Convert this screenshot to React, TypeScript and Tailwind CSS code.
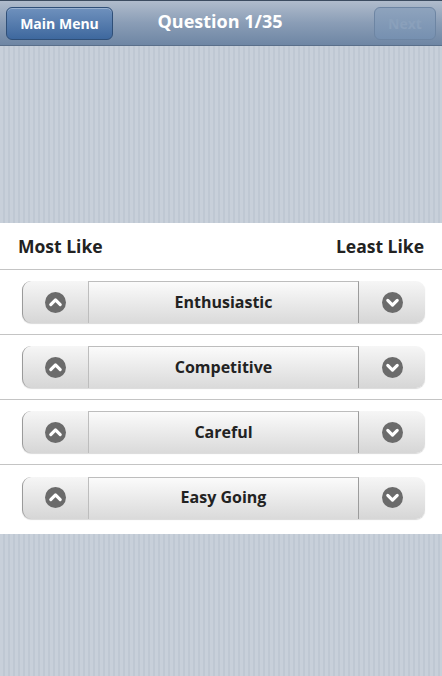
import React from "react";

const font = { fontFamily: '"Open Sans", "Noto Sans", "DejaVu Sans", sans-serif' };

function UpIcon() {
  return (
    <svg width="21" height="21" viewBox="0 0 20 20">
      <circle cx="10" cy="10" r="10" fill="#6b6b6b" />
      <path d="M5.5 12 L10 7.5 L14.5 12" stroke="#fff" strokeWidth="3" fill="none" strokeLinecap="round" strokeLinejoin="round" />
    </svg>
  );
}
function DownIcon() {
  return (
    <svg width="21" height="21" viewBox="0 0 20 20">
      <circle cx="10" cy="10" r="10" fill="#6b6b6b" />
      <path d="M5.5 8 L10 12.5 L14.5 8" stroke="#fff" strokeWidth="3" fill="none" strokeLinecap="round" strokeLinejoin="round" />
    </svg>
  );
}

function Row({ label, last }: { label: string; last?: boolean }) {
  return (
    <div className={`h-[65px] flex items-center pl-[22px] pr-[17px] ${last ? "" : "border-b border-[#c4c4c4]"}`}>
      <div className="w-full h-[42px] flex rounded-[9px] overflow-hidden bg-gradient-to-b from-[#f6f6f6] to-[#d6d6d6] shadow-[0_1px_1px_rgba(0,0,0,0.15)] border-l border-[#9a9a9a]">
        <div className="w-[65px] flex items-center justify-center">
          <UpIcon />
        </div>
        <div className="flex-1 flex items-center justify-center bg-gradient-to-b from-[#fbfbfb] to-[#dadada] border-t border-x border-[#bdbdbd] border-r-[#9c9c9c]">
          <span className="text-[16px] font-bold text-[#222] pb-[2px]" style={font}>{label}</span>
        </div>
        <div className="w-[66px] flex items-center justify-center">
          <DownIcon />
        </div>
      </div>
    </div>
  );
}

const stripes = "bg-[repeating-linear-gradient(90deg,#c8d0da_0px,#c8d0da_3px,#bfc8d3_3px,#bfc8d3_5px)]";

export default function App() {
  return (
    <div className="w-[442px] h-[676px] flex flex-col overflow-hidden" style={font}>
      <div className="h-[46px] flex items-center justify-between px-[6px] bg-gradient-to-b from-[#b0bccc] via-[#8a9db6] to-[#6e86a4] border-t border-[#3c4c60] border-b border-b-[#5a6f8a] relative">
        <div className="w-[107px] h-[33px] rounded-[6px] border border-[#2f4f78] bg-gradient-to-b from-[#6f91bd] to-[#3e689e] flex items-center justify-center text-white text-[14px] font-bold shadow-[inset_0_1px_0_rgba(255,255,255,0.3)]">
          Main Menu
        </div>
        <div className="absolute left-0 right-0 top-0 h-full flex items-center justify-center pointer-events-none">
          <span className="text-white text-[18px] font-bold pr-[2px] pb-[4px]">Question 1/35</span>
        </div>
        <div className="w-[62px] h-[33px] rounded-[6px] border border-[#6d85a3] bg-gradient-to-b from-[#8ea3bd] to-[#7690b0] flex items-center justify-center text-[#8aa0bb] text-[14px] font-bold">
          Next
        </div>
      </div>
      <div className={`h-[177px] ${stripes}`} />
      <div className="bg-white h-[311px] flex flex-col">
        <div className="h-[47px] flex items-center justify-between px-[18px] border-b border-[#c4c4c4]">
          <span className="text-[17.5px] font-bold text-[#222]">Most Like</span>
          <span className="text-[17.5px] font-bold text-[#222]">Least Like</span>
        </div>
        <Row label="Enthusiastic" />
        <Row label="Competitive" />
        <Row label="Careful" />
        <Row label="Easy Going" last />
      </div>
      <div className={`flex-1 ${stripes}`} />
    </div>
  );
}
